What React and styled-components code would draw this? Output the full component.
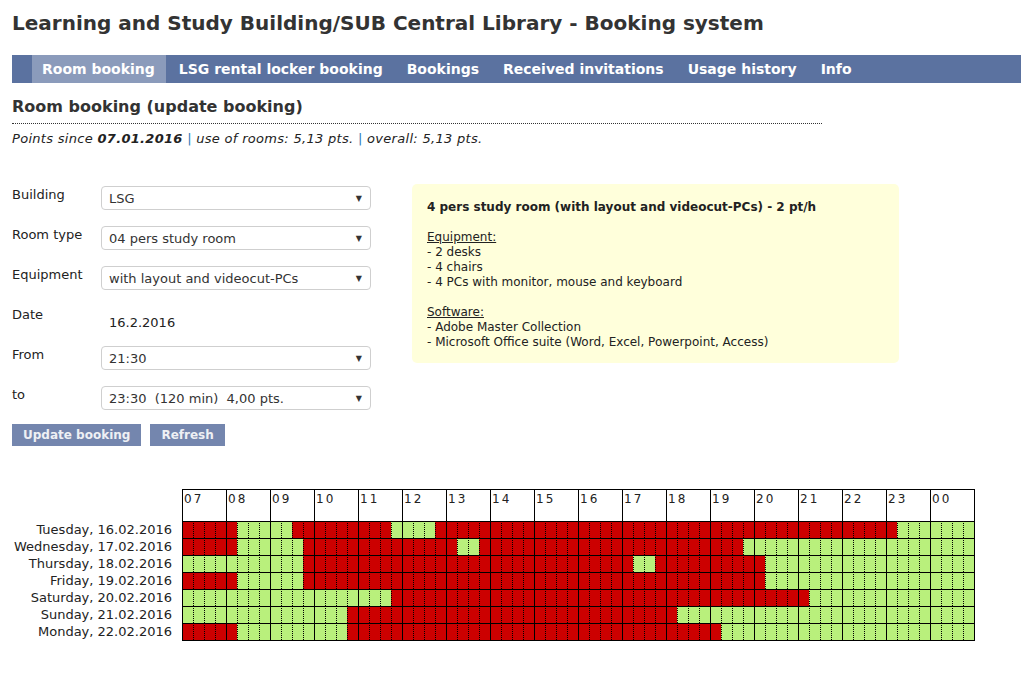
import React from "react";
import styled, { createGlobalStyle } from "styled-components";

const GlobalStyle = createGlobalStyle`
  body {
    margin: 0;
    background: #fff;
    font-family: Verdana, "DejaVu Sans", sans-serif;
    color: #222;
  }
`;

const Page = styled.div`
  padding: 9px 0 30px 12px;
`;

const Title = styled.h1`
  margin: 0;
  font-size: 20px;
  line-height: 28px;
  font-weight: bold;
  color: #333;
`;

const NavBar = styled.nav`
  display: flex;
  height: 28px;
  margin-top: 18px;
  padding-left: 20px;
  background: #5b72a0;
`;

const NavItem = styled.a`
  display: flex;
  align-items: center;
  padding: 0 11px 0 10px;
  margin-right: 3px;
  font-size: 14px;
  font-weight: bold;
  color: #fff;
  background: ${(p) => (p.$active ? "#8b9bbb" : "transparent")};
  text-decoration: none;
`;

const Heading = styled.h2`
  width: 810px;
  margin: 12px 0 0;
  padding-bottom: 4px;
  font-size: 16px;
  line-height: 24px;
  font-weight: bold;
  color: #333;
  border-bottom: 1px dotted #333;
`;

const Points = styled.div`
  margin-top: 6px;
  font-size: 13px;
  line-height: 18px;
  letter-spacing: 0.3px;
  font-style: italic;
  color: #222;

  b {
    font-weight: bold;
  }
`;

const Sep = styled.span`
  color: #2a78b8;
  font-style: normal;
`;

const FormArea = styled.div`
  display: flex;
  align-items: flex-start;
  gap: 41px;
  margin-top: 38px;
`;

const Form = styled.div`
  display: grid;
  grid-template-columns: 89px 270px;
  grid-auto-rows: 40px;
`;

const Label = styled.div`
  font-size: 13px;
  line-height: 18px;
  color: #222;
`;

const Select = styled.div`
  box-sizing: border-box;
  display: flex;
  align-items: center;
  justify-content: space-between;
  height: 24px;
  padding: 0 8px 0 7px;
  border: 1px solid #cfcfcf;
  border-radius: 4px;
  font-size: 13px;
  color: #333;
  background: #fff;
  white-space: pre;
`;

const Arrow = styled.span`
  font-size: 8px;
  color: #333;
`;

const DateValue = styled.div`
  padding: 8px 0 0 8px;
  font-size: 13px;
  line-height: 18px;
  color: #222;
`;

const InfoBox = styled.div`
  box-sizing: border-box;
  width: 487px;
  margin-top: -2px;
  padding: 16px 15px 13px;
  background: #ffffdb;
  border-radius: 5px;
  font-size: 12px;
  line-height: 15px;
  color: #222;
`;

const InfoTitle = styled.div`
  font-weight: bold;
  margin-bottom: 15px;
`;

const InfoHead = styled.div`
  text-decoration: underline;
`;

const InfoBlock = styled.div`
  margin-bottom: ${(p) => (p.$gap ? "15px" : "0")};
`;

const ButtonRow = styled.div`
  display: flex;
  gap: 9px;
  margin-top: -2px;
`;

const Button = styled.button`
  height: 22px;
  padding: 0 11px;
  border: none;
  background: #7486ae;
  color: #eef0f4;
  font-family: inherit;
  font-size: 12px;
  font-weight: bold;
`;

const Schedule = styled.div`
  display: flex;
  margin-top: 43px;
`;

const DayColumn = styled.div`
  width: 160px;
  margin-right: 10px;
  padding-top: 32px;
`;

const DayLabel = styled.div`
  height: 17px;
  line-height: 17px;
  text-align: right;
  font-size: 13px;
  color: #222;
  white-space: nowrap;
`;

const Grid = styled.div`
  display: grid;
  grid-template-columns: repeat(72, 11px);
  border-right: 1px solid #000;
  border-bottom: 1px solid #000;
`;

const HourCell = styled.div`
  grid-column: span 4;
  box-sizing: border-box;
  height: 32px;
  padding: 2px 0 0 1px;
  border-left: 1px solid #000;
  border-top: 1px solid #000;
  background: #fff;
  font-size: 12px;
  line-height: 14px;
  letter-spacing: 2px;
  color: #222;
`;

const Slot = styled.div`
  box-sizing: border-box;
  height: 17px;
  border-top: 1px solid #000;
  border-left: 1px ${(p) => (p.$hourStart ? "solid" : "dotted")} #000;
  background: ${(p) => (p.$booked ? "#cc0000" : "#b9f07c")};
`;

const hours = ["07", "08", "09", "10", "11", "12", "13", "14", "15", "16", "17", "18", "19", "20", "21", "22", "23", "00"];

// booked ranges in quarter-hour slots counted from 07:00
const days = [
  { label: "Tuesday, 16.02.2016", booked: [[0, 5], [10, 19], [23, 65]] },
  { label: "Wednesday, 17.02.2016", booked: [[0, 5], [11, 25], [27, 51]] },
  { label: "Thursday, 18.02.2016", booked: [[11, 41], [43, 53]] },
  { label: "Friday, 19.02.2016", booked: [[0, 5], [11, 53]] },
  { label: "Saturday, 20.02.2016", booked: [[19, 57]] },
  { label: "Sunday, 21.02.2016", booked: [[15, 45]] },
  { label: "Monday, 22.02.2016", booked: [[0, 5], [15, 49]] },
];

const isBooked = (ranges, i) => ranges.some(([a, b]) => i >= a && i < b);

const fields = [
  { label: "Building", value: "LSG" },
  { label: "Room type", value: "04 pers study room" },
  { label: "Equipment", value: "with layout and videocut-PCs" },
  { label: "Date", date: "16.2.2016" },
  { label: "From", value: "21:30" },
  { label: "to", value: "23:30  (120 min)  4,00 pts." },
];

const navItems = ["Room booking", "LSG rental locker booking", "Bookings", "Received invitations", "Usage history", "Info"];

export default function App() {
  return (
    <Page>
      <GlobalStyle />
      <Title>Learning and Study Building/SUB Central Library - Booking system</Title>
      <NavBar>
        {navItems.map((item, i) => (
          <NavItem key={item} $active={i === 0}>{item}</NavItem>
        ))}
      </NavBar>
      <Heading>Room booking (update booking)</Heading>
      <Points>
        Points since <b>07.01.2016</b> <Sep>|</Sep> use of rooms: 5,13 pts. <Sep>|</Sep> overall: 5,13 pts.
      </Points>

      <FormArea>
        <div>
          <Form>
            {fields.map((f) => (
              <React.Fragment key={f.label}>
                <Label>{f.label}</Label>
                {f.date ? (
                  <DateValue>{f.date}</DateValue>
                ) : (
                  <Select>
                    <span>{f.value}</span>
                    <Arrow>▼</Arrow>
                  </Select>
                )}
              </React.Fragment>
            ))}
          </Form>
          <ButtonRow>
            <Button>Update booking</Button>
            <Button>Refresh</Button>
          </ButtonRow>
        </div>
        <InfoBox>
          <InfoTitle>4 pers study room (with layout and videocut-PCs) - 2 pt/h</InfoTitle>
          <InfoBlock $gap>
            <InfoHead>Equipment:</InfoHead>
            <div>- 2 desks</div>
            <div>- 4 chairs</div>
            <div>- 4 PCs with monitor, mouse and keyboard</div>
          </InfoBlock>
          <InfoBlock>
            <InfoHead>Software:</InfoHead>
            <div>- Adobe Master Collection</div>
            <div>- Microsoft Office suite (Word, Excel, Powerpoint, Access)</div>
          </InfoBlock>
        </InfoBox>
      </FormArea>

      <Schedule>
        <DayColumn>
          {days.map((d) => (
            <DayLabel key={d.label}>{d.label}</DayLabel>
          ))}
        </DayColumn>
        <Grid>
          {hours.map((h) => (
            <HourCell key={h}>{h}</HourCell>
          ))}
          {days.map((d) =>
            Array.from({ length: 72 }, (_, i) => (
              <Slot key={d.label + i} $hourStart={i % 4 === 0} $booked={isBooked(d.booked, i)} />
            ))
          )}
        </Grid>
      </Schedule>
    </Page>
  );
}
